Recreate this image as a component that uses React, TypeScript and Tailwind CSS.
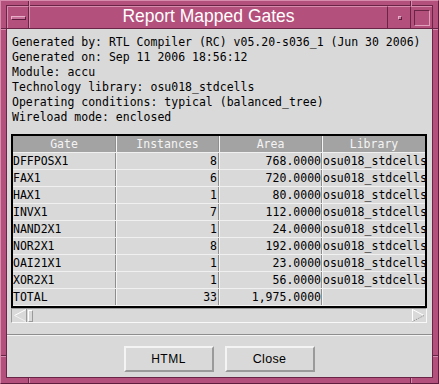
import React from "react";

const rows: [string, string, string, string][] = [
  ["DFFPOSX1", "8", "768.0000", "osu018_stdcells"],
  ["FAX1", "6", "720.0000", "osu018_stdcells"],
  ["HAX1", "1", "80.0000", "osu018_stdcells"],
  ["INVX1", "7", "112.0000", "osu018_stdcells"],
  ["NAND2X1", "1", "24.0000", "osu018_stdcells"],
  ["NOR2X1", "8", "192.0000", "osu018_stdcells"],
  ["OAI21X1", "1", "23.0000", "osu018_stdcells"],
  ["XOR2X1", "1", "56.0000", "osu018_stdcells"],
  ["TOTAL", "33", "1,975.0000", ""],
];

const info = [
  "Generated by: RTL Compiler (RC) v05.20-s036_1 (Jun 30 2006)",
  "Generated on: Sep 11 2006 18:56:12",
  "Module: accu",
  "Technology library: osu018_stdcells",
  "Operating conditions: typical (balanced_tree)",
  "Wireload mode: enclosed",
];

const mono = { fontFamily: '"DejaVu Sans Mono", "Liberation Mono", monospace' };

function Row({ cells, header }: { cells: string[]; header?: boolean }) {
  const base = header
    ? "bg-[#a3a3a3] text-[#f4f4f4] text-center"
    : "bg-[#d9d9d9] text-black";
  return (
    <div className="flex h-[17px] border-b border-b-[#f0f0f0]">
      <div className={`w-[103px] shrink-0 border-r border-r-[#8e8e8e] overflow-hidden whitespace-nowrap leading-[16px] ${base} ${header ? "" : "pl-[0px]"}`}>
        {cells[0]}
      </div>
      <div className={`w-[103px] shrink-0 border-l border-l-[#f4f4f4] border-r border-r-[#8e8e8e] overflow-hidden whitespace-nowrap leading-[16px] ${base} ${header ? "" : "text-right pr-[1px]"}`}>
        {cells[1]}
      </div>
      <div className={`w-[103px] shrink-0 border-l border-l-[#f4f4f4] border-r border-r-[#8e8e8e] overflow-hidden whitespace-nowrap leading-[16px] ${base} ${header ? "" : "text-right pr-[0px]"}`}>
        {cells[2]}
      </div>
      <div className={`w-[103px] shrink-0 border-l border-l-[#f4f4f4] overflow-hidden whitespace-nowrap leading-[16px] ${base}`}>
        {cells[3]}
      </div>
    </div>
  );
}

export default function App() {
  return (
    <div className="relative w-[439px] h-[384px] bg-[#b4507c] border border-t-[#d88cad] border-l-[#d88cad] border-b-[#5e1d3c] border-r-[#5e1d3c] pt-[4px] pl-[5px] pr-[5px] pb-[5px]">
      {/* frame corner marks */}
      <div className="absolute left-[27px] top-0 w-[1px] h-[5px] bg-[#6a2446]" />
      <div className="absolute left-[28px] top-0 w-[1px] h-[5px] bg-[#d88cad]" />
      <div className="absolute left-[409px] top-0 w-[1px] h-[5px] bg-[#6a2446]" />
      <div className="absolute left-[410px] top-0 w-[1px] h-[5px] bg-[#d88cad]" />
      <div className="absolute left-0 top-[27px] w-[5px] h-[1px] bg-[#6a2446]" />
      <div className="absolute left-0 top-[28px] w-[5px] h-[1px] bg-[#d88cad]" />
      <div className="absolute right-0 top-[27px] w-[5px] h-[1px] bg-[#6a2446]" />
      <div className="absolute right-0 top-[28px] w-[5px] h-[1px] bg-[#d88cad]" />
      <div className="absolute left-0 top-[354px] w-[5px] h-[1px] bg-[#6a2446]" />
      <div className="absolute left-0 top-[355px] w-[5px] h-[1px] bg-[#d88cad]" />
      <div className="absolute right-0 top-[354px] w-[5px] h-[1px] bg-[#6a2446]" />
      <div className="absolute right-0 top-[355px] w-[5px] h-[1px] bg-[#d88cad]" />
      <div className="absolute left-[27px] bottom-0 w-[1px] h-[5px] bg-[#6a2446]" />
      <div className="absolute left-[28px] bottom-0 w-[1px] h-[5px] bg-[#d88cad]" />
      <div className="absolute left-[409px] bottom-0 w-[1px] h-[5px] bg-[#6a2446]" />
      <div className="absolute left-[410px] bottom-0 w-[1px] h-[5px] bg-[#d88cad]" />

      <div className="w-full h-full border border-[#6a2446] flex flex-col">
        {/* title bar */}
        <div className="h-[23px] shrink-0 flex border-b border-b-[#6a2446]">
          <div className="w-[22px] shrink-0 border-r border-r-[#6a2446] border-t border-t-[#d88cad] border-l border-l-[#d88cad] flex items-center justify-center">
            <div className="w-[15px] h-[4px] bg-[#c8709a] border-t border-t-[#e8b0c8] border-l border-l-[#e8b0c8] border-b border-b-[#5e1d3c] border-r border-r-[#5e1d3c] mt-[1px]" />
          </div>
          <div
            className="flex-1 border-t border-t-[#d88cad] border-l border-l-[#d88cad] flex items-center justify-center text-white text-[17.5px] leading-none pb-[1px]"
            style={{ fontFamily: '"Liberation Sans", Arial, sans-serif' }}
          >
            Report Mapped Gates
          </div>
          <div className="w-[23px] shrink-0 border-l border-l-[#6a2446] border-t border-t-[#d88cad] flex items-center justify-center">
            <div className="w-[4px] h-[4px] bg-[#c8709a] border-t border-t-[#e8b0c8] border-l border-l-[#e8b0c8] border-b border-b-[#5e1d3c] border-r border-r-[#5e1d3c] ml-[1px]" />
          </div>
          <div className="w-[22px] shrink-0 border-l border-l-[#6a2446] border-t border-t-[#d88cad] flex items-center justify-center">
            <div className="w-[16px] h-[16px] border border-t-[#6a2446] border-l-[#6a2446] border-b-[#e0a0bc] border-r-[#e0a0bc]" />
          </div>
        </div>

        {/* content */}
        <div className="flex-1 bg-[#d9d9d9] flex flex-col">
          <div className="pt-[6px] pl-[5px] text-[11.5px] leading-[15px] text-black whitespace-pre" style={mono}>
            {info.map((l) => (
              <div key={l}>{l}</div>
            ))}
          </div>

          <div className="ml-[4px] mt-[9px] w-[416px] border-2 border-black text-[11.5px] overflow-hidden" style={mono}>
            <Row cells={["Gate", "Instances", "Area", "Library"]} header />
            {rows.map((r) => (
              <Row key={r[0]} cells={r} />
            ))}
          </div>

          {/* scrollbar */}
          <div className="ml-[4px] w-[416px] h-[15px] border border-t-[#9a9a9a] border-l-[#9a9a9a] border-b-[#f8f8f8] border-r-[#f8f8f8] flex items-center">
            <svg width="14" height="13" viewBox="0 0 14 13" className="shrink-0 ml-[1px]">
              <line x1="1.5" y1="6.5" x2="13" y2="0.5" stroke="#ffffff" strokeWidth="1" />
              <line x1="1.5" y1="6.5" x2="13" y2="12.5" stroke="#f0f0f0" strokeWidth="1" />
              <line x1="13.5" y1="0" x2="13.5" y2="13" stroke="#9a9a9a" strokeWidth="1" />
            </svg>
            <div className="w-[5px] h-[12px] shrink-0 ml-[1px] border border-t-[#ffffff] border-l-[#ffffff] border-b-[#9a9a9a] border-r-[#9a9a9a]" />
            <div className="flex-1" />
            <svg width="13" height="13" viewBox="0 0 13 13" className="shrink-0 mr-[1px]">
              <line x1="0.5" y1="0" x2="0.5" y2="13" stroke="#ffffff" strokeWidth="1" />
              <line x1="0.5" y1="0.5" x2="12" y2="6.5" stroke="#ffffff" strokeWidth="1" />
              <line x1="0.5" y1="12.5" x2="12" y2="6.5" stroke="#8a8a8a" strokeWidth="1" strokeDasharray="1 1" />
            </svg>
          </div>

          {/* separator */}
          <div className="mt-[11px] h-[2px] border-t border-t-[#8e8e8e] border-b border-b-[#f4f4f4]" />

          {/* buttons */}
          <div className="mt-[10px] flex justify-center gap-[11px] pr-[1px]" style={{ fontFamily: '"Liberation Sans", Arial, sans-serif' }}>
            <div className="w-[90px] h-[26px] border-2 border-t-[#f4f4f4] border-l-[#f4f4f4] border-b-[#9a9a9a] border-r-[#9a9a9a] bg-[#d9d9d9] flex items-center justify-center text-[12px] text-black tracking-[0.5px]">
              HTML
            </div>
            <div className="w-[90px] h-[26px] border-2 border-t-[#f4f4f4] border-l-[#f4f4f4] border-b-[#9a9a9a] border-r-[#9a9a9a] bg-[#d9d9d9] flex items-center justify-center text-[12.5px] text-black tracking-[0.3px]">
              Close
            </div>
          </div>
        </div>
      </div>
    </div>
  );
}
